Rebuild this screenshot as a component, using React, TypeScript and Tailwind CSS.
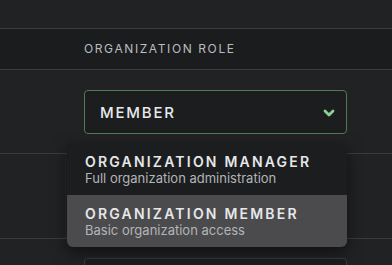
export default function App() {
  const roles = [
    { title: "Organization Manager", desc: "Full organization administration", active: false },
    { title: "Organization Member", desc: "Basic organization access", active: true },
  ];

  return (
    <main
      className="relative h-[265px] w-[392px] overflow-hidden bg-[#212224]"
      style={{ fontFamily: "Inter, 'Noto Sans', sans-serif" }}
    >
      {/* spacer above the table */}
      <div className="h-[29px] border-b border-[#3c3d40]" />

      {/* header */}
      <div className="flex h-[41px] items-center border-b border-[#3c3d40] bg-[#1b1c1e] pl-[84px]">
        <span className="text-[12px] tracking-[1.6px] text-[#b9bdc1] uppercase">Organization Role</span>
      </div>

      {/* row with select */}
      <div className="border-b border-[#3c3d40] pt-[20px] pb-[19px] pl-[84px] pr-[45px]">
        <div className="flex h-[44px] items-center justify-between rounded-[4px] border border-[#4f7a52] bg-[#1c1d1f] pl-[15px] pr-[11px]">
          <span className="mt-[3px] text-[15px] font-medium tracking-[1.8px] text-[#e8eaec]">MEMBER</span>
          <svg width="12" height="9" viewBox="0 0 12 9" fill="none" className="mt-[3px]">
            <path
              d="M2 2L6 6L10 2"
              stroke="#8fd194"
              strokeWidth="2.8"
              strokeLinecap="round"
              strokeLinejoin="round"
            />
          </svg>
        </div>
      </div>

      {/* row hidden under menu */}
      <div className="h-[85px] border-b border-[#3c3d40] px-[65px]">
        <div className="h-full border-x border-[#2a2b2e]" />
      </div>

      {/* next row */}
      <div className="pt-[19px] pl-[84px] pr-[45px]">
        <div className="h-[40px] rounded-[4px] border border-[#3a3b3e] bg-[#1c1d1f]" />
      </div>

      {/* open dropdown menu */}
      <div className="absolute top-[143px] left-[67px] w-[280px] overflow-hidden rounded-b-[6px] bg-[#1c1d1f] shadow-[0_6px_16px_rgba(0,0,0,0.5)]">
        {roles.map((r) => (
          <div
            key={r.title}
            className={`flex h-[52px] flex-col justify-center pl-[18px] ${r.active ? "bg-[#4b4b4d]" : ""}`}
          >
            <span className="text-[14px] leading-[17px] font-semibold tracking-[2.2px] text-[#e6e7e9] uppercase">
              {r.title}
            </span>
            <span className="text-[13px] leading-[16px] text-[#b2b5b8]">{r.desc}</span>
          </div>
        ))}
      </div>
    </main>
  );
}
